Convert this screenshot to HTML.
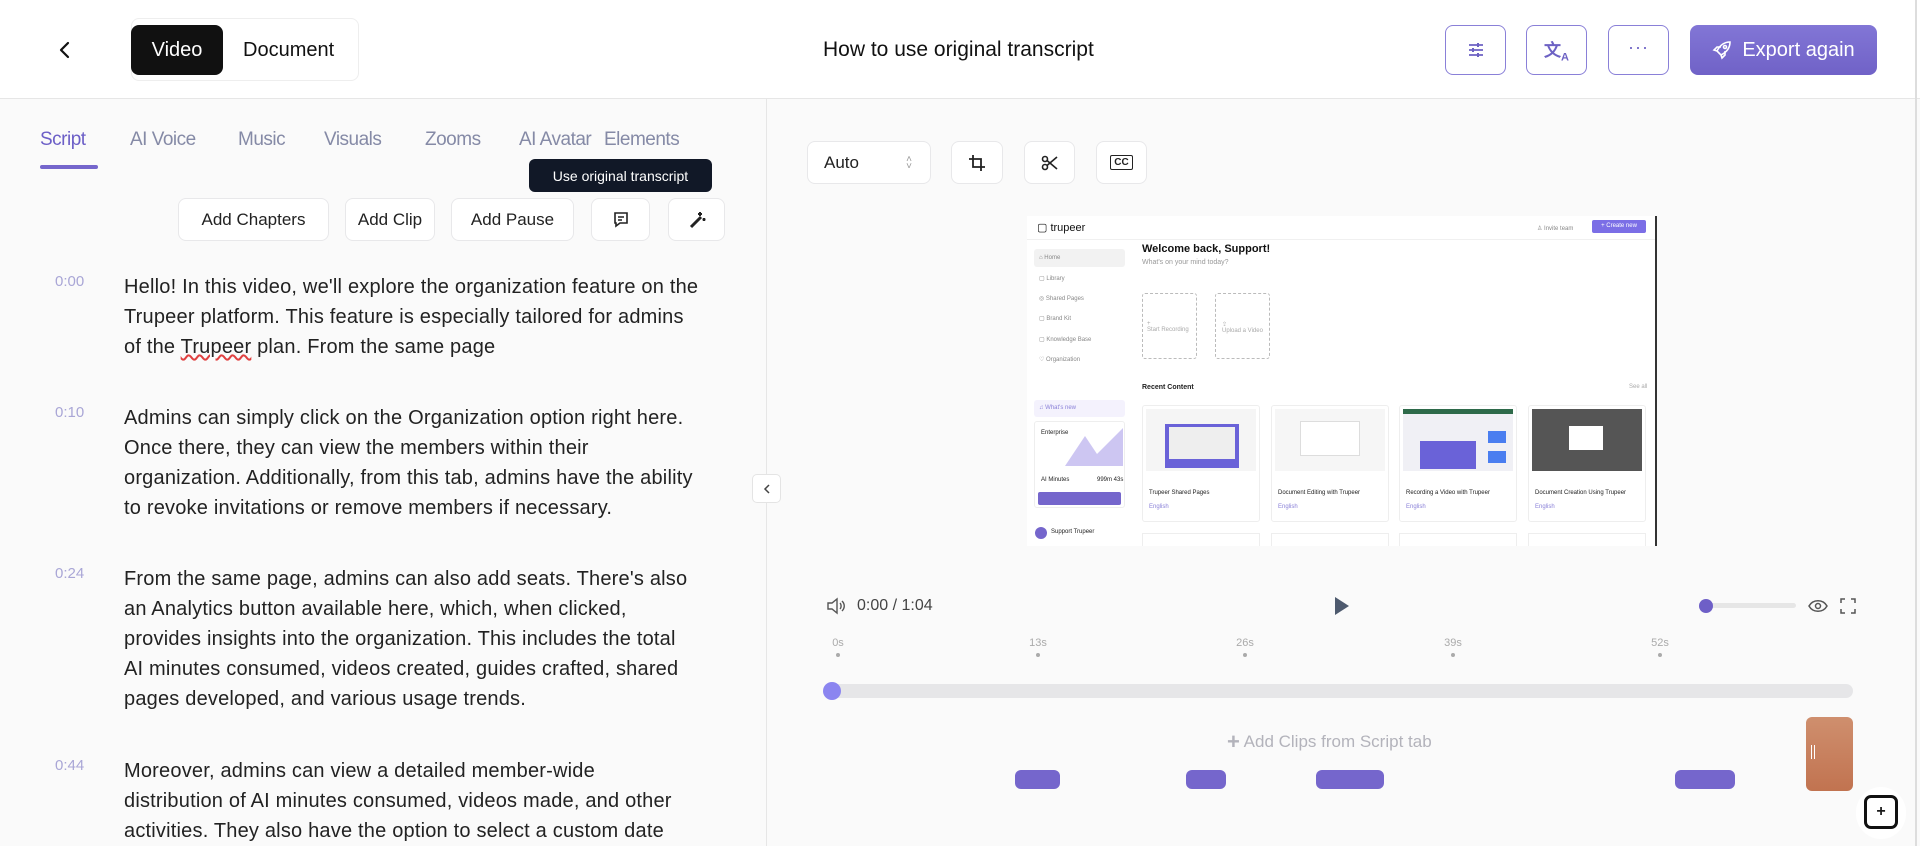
<!DOCTYPE html>
<html><head><meta charset="utf-8"><style>
*{box-sizing:border-box;margin:0;padding:0}
body{width:1920px;height:846px;overflow:hidden;background:#fafafa;font-family:"Liberation Sans",sans-serif;color:#1a1a1a;position:relative}
.a{position:absolute}
.hdr{left:0;top:0;width:1920px;height:99px;background:#fff;border-bottom:1px solid #e6e6e6}
.btn{position:absolute;border:1px solid #e8e8ea;background:#fff;border-radius:8px;display:flex;align-items:center;justify-content:center;font-size:17px;color:#222}
.obtn{position:absolute;border:1.5px solid #8a80d8;background:#fff;border-radius:8px;display:flex;align-items:center;justify-content:center}
.tab{position:absolute;top:129px;font-size:19px;letter-spacing:-0.5px;color:#858aa6}
.ts{position:absolute;left:55px;font-size:15px;color:#a9a6d6}
.p{position:absolute;left:124px;font-size:20px;letter-spacing:0.2px;line-height:30px;color:#222;white-space:nowrap}
.tick{position:absolute;top:637px;font-size:11px;color:#aaa;transform:translateX(-50%)}
.dot{position:absolute;top:653px;width:4px;height:4px;border-radius:2px;background:#aaa}
.pill{position:absolute;top:770px;height:19px;border-radius:6px;background:#7566cc}
.t{position:absolute;font-size:6px;color:#888;white-space:nowrap}
</style></head><body>
<div class="a hdr"></div>
<svg class="a" style="left:56px;top:40px" width="18" height="20" viewBox="0 0 18 20"><path d="M12 3 L5 10 L12 17" stroke="#111" stroke-width="2.2" fill="none" stroke-linecap="round" stroke-linejoin="round"/></svg>
<div class="a" style="left:131px;top:18px;width:228px;height:63px;border:1px solid #eee;border-radius:8px;background:#fff"></div>
<div class="a" style="left:131px;top:25px;width:92px;height:50px;background:#111;border-radius:8px;color:#fff;font-size:20px;display:flex;align-items:center;justify-content:center">Video</div>
<div class="a" style="left:243px;top:39px;font-size:20px;color:#111">Document</div>
<div class="a" style="left:823px;top:38px;font-size:21px;color:#111">How to use original transcript</div>
<div class="obtn" style="left:1445px;top:25px;width:61px;height:50px"><svg width="20" height="20" viewBox="0 0 20 20" stroke="#6d62c4" stroke-width="1.8" fill="none"><path d="M3 5h14M3 10h14M3 15h14"/><path d="M12 3v4M7 8v4M12 13v4" stroke-width="2"/></svg></div>
<div class="obtn" style="left:1526px;top:25px;width:61px;height:50px"><span style="color:#6d62c4;font-size:17px;font-weight:bold">文<sub style="font-size:11px">A</sub></span></div>
<div class="obtn" style="left:1608px;top:25px;width:61px;height:50px"><span style="color:#6d62c4;font-size:18px;letter-spacing:1px;margin-top:-6px">···</span></div>
<div class="a" style="left:1690px;top:25px;width:187px;height:50px;border-radius:8px;background:linear-gradient(#8276d6,#7062c7);color:#fff;font-size:20px;display:flex;align-items:center;justify-content:center;gap:10px"><svg width="20" height="20" viewBox="0 0 20 20" fill="none" stroke="#fff" stroke-width="1.6"><path d="M7 13 L5 11 C8 5 12 2 18 2 C18 8 15 12 9 15 Z"/><path d="M5 11 L2 10 L5 7 L9 7 M9 15 L10 18 L13 15 L13 11"/><circle cx="13" cy="7" r="1.5"/></svg>Export again</div>
<div class="a" style="left:1915px;top:0;width:2px;height:846px;background:#ddd"></div>

<!-- left panel -->
<div class="a" style="left:766px;top:99px;width:1px;height:747px;background:#e6e6e6"></div>
<div class="tab" style="left:40px;color:#6c5fc7">Script</div>
<div class="a" style="left:40px;top:165px;width:58px;height:4px;border-radius:2px;background:#7566cc"></div>
<div class="tab" style="left:130px">AI Voice</div>
<div class="tab" style="left:238px">Music</div>
<div class="tab" style="left:324px">Visuals</div>
<div class="tab" style="left:425px">Zooms</div>
<div class="tab" style="left:519px">AI Avatar</div>
<div class="tab" style="left:604px">Elements</div>
<div class="a" style="left:529px;top:159px;width:183px;height:33px;background:#111827;border-radius:6px;color:#fff;font-size:14px;display:flex;align-items:center;justify-content:center">Use original transcript</div>
<div class="btn" style="left:178px;top:198px;width:151px;height:43px">Add Chapters</div>
<div class="btn" style="left:345px;top:198px;width:90px;height:43px">Add Clip</div>
<div class="btn" style="left:451px;top:198px;width:123px;height:43px">Add Pause</div>
<div class="btn" style="left:591px;top:198px;width:59px;height:43px"><svg width="18" height="18" viewBox="0 0 18 18" fill="none" stroke="#222" stroke-width="1.6"><path d="M3 2h12v10H8l-4 3v-3H3z"/><path d="M6 6h6M6 9h4"/></svg></div>
<div class="btn" style="left:668px;top:198px;width:57px;height:43px"><svg width="18" height="18" viewBox="0 0 18 18" fill="none" stroke="#222" stroke-width="2"><path d="M3 16 L13 6" stroke-width="3"/><path d="M12 1v4M10 3h4M16 7v3M14.5 8.5h3"/></svg></div>

<div class="ts" style="top:273px">0:00</div>
<div class="p" style="top:272px">Hello! In this video, we'll explore the organization feature on the<br>Trupeer platform. This feature is especially tailored for admins<br>of the <span style="text-decoration:underline wavy #e04040">Trupeer</span> plan. From the same page</div>
<div class="ts" style="top:404px">0:10</div>
<div class="p" style="top:403px">Admins can simply click on the Organization option right here.<br>Once there, they can view the members within their<br>organization. Additionally, from this tab, admins have the ability<br>to revoke invitations or remove members if necessary.</div>
<div class="ts" style="top:565px">0:24</div>
<div class="p" style="top:564px">From the same page, admins can also add seats. There's also<br>an Analytics button available here, which, when clicked,<br>provides insights into the organization. This includes the total<br>AI minutes consumed, videos created, guides crafted, shared<br>pages developed, and various usage trends.</div>
<div class="ts" style="top:757px">0:44</div>
<div class="p" style="top:756px">Moreover, admins can view a detailed member-wide<br>distribution of AI minutes consumed, videos made, and other<br>activities. They also have the option to select a custom date</div>
<div class="a" style="left:752px;top:474px;width:29px;height:29px;border:1px solid #e4e4e4;border-radius:5px;background:#fff;display:flex;align-items:center;justify-content:center"><svg width="10" height="12" viewBox="0 0 10 12"><path d="M7 2 L3 6 L7 10" stroke="#444" stroke-width="1.5" fill="none"/></svg></div>

<!-- right toolbar -->
<div class="btn" style="left:807px;top:141px;width:124px;height:43px;justify-content:flex-start;padding-left:16px">Auto<span style="position:absolute;right:18px;font-size:10px;color:#999;line-height:7px">˄<br>˅</span></div>
<div class="btn" style="left:951px;top:141px;width:52px;height:43px"><svg width="18" height="18" viewBox="0 0 18 18" fill="none" stroke="#222" stroke-width="1.8"><path d="M5 1v12h12M1 5h12v12"/></svg></div>
<div class="btn" style="left:1024px;top:141px;width:51px;height:43px"><svg width="18" height="18" viewBox="0 0 18 18" fill="none" stroke="#222" stroke-width="1.6"><circle cx="4" cy="5" r="2.5"/><circle cx="4" cy="13" r="2.5"/><path d="M6 6.5 L16 15M6 11.5 L16 3"/></svg></div>
<div class="btn" style="left:1096px;top:141px;width:51px;height:43px"><div style="border:1.5px solid #222;border-radius:2px;font-size:10px;padding:1px 3px;font-weight:bold">CC</div></div>

<!-- preview -->
<div class="a" style="left:1027px;top:216px;width:630px;height:330px;background:#fff;overflow:hidden;border-right:2px solid #333">
 <div class="a" style="left:0;top:0;width:630px;height:24px;border-bottom:1px solid #f0f0f0"></div>
 <div class="a" style="left:10px;top:5px;font-size:11px;color:#111">▢ trupeer</div>
 <div class="t" style="left:510px;top:9px">♙ Invite team</div>
 <div class="a" style="left:565px;top:4px;width:54px;height:13px;background:#7b6ee6;border-radius:2px;color:#fff;font-size:6px;text-align:center;line-height:13px">+ Create new</div>
 <div class="a" style="left:7px;top:33px;width:91px;height:18px;background:#f2f2f2;border-radius:3px"></div>
 <div class="t" style="left:12px;top:39px">⌂ Home</div>
 <div class="t" style="left:12px;top:59px">▢ Library</div>
 <div class="t" style="left:12px;top:79px">◎ Shared Pages</div>
 <div class="t" style="left:12px;top:99px">▢ Brand Kit</div>
 <div class="t" style="left:12px;top:120px">▢ Knowledge Base</div>
 <div class="t" style="left:12px;top:140px">♡ Organization</div>
 <div class="a" style="left:7px;top:184px;width:91px;height:17px;background:#f4f2fd;border-radius:3px"></div>
 <div class="t" style="left:12px;top:189px;color:#8a80d8">♫ What's new</div>
 <div class="a" style="left:7px;top:205px;width:91px;height:87px;border:1px solid #eee;border-radius:3px;overflow:hidden">
  <div class="t" style="left:6px;top:8px;color:#222">Enterprise</div>
  <svg class="a" style="left:30px;top:4px" width="60" height="40" viewBox="0 0 60 40"><path d="M0 40 L20 10 L32 28 L58 2 L58 40Z" fill="#cdc6f2"/></svg>
  <div class="t" style="left:6px;top:55px;color:#222">AI Minutes</div>
  <div class="t" style="left:62px;top:55px;color:#222">999m 43s</div>
  <div class="a" style="left:3px;top:70px;width:83px;height:13px;background:#7566cc;border-radius:2px"></div>
 </div>
 <div class="a" style="left:8px;top:311px;width:12px;height:12px;border-radius:6px;background:#7566cc"></div>
 <div class="t" style="left:24px;top:313px;color:#222">Support Trupeer</div>
 <div class="a" style="left:115px;top:27px;font-size:11px;font-weight:bold;color:#111">Welcome back, Support!</div>
 <div class="a" style="left:115px;top:43px;font-size:7px;color:#999">What's on your mind today?</div>
 <div class="a" style="left:115px;top:77px;width:55px;height:66px;border:1px dashed #bbb;border-radius:3px"></div>
 <div class="a" style="left:188px;top:77px;width:55px;height:66px;border:1px dashed #bbb;border-radius:3px"></div>
 <div class="t" style="left:120px;top:105px;color:#aaa">+<br>Start Recording</div>
 <div class="t" style="left:195px;top:105px;color:#aaa">⇪<br>Upload a Video</div>
 <div class="a" style="left:115px;top:168px;font-size:7px;font-weight:bold;color:#222">Recent Content</div>
 <div class="t" style="left:602px;top:168px;color:#aaa">See all</div>
 <div class="a" style="left:115px;top:189px;width:118px;height:117px;border:1px solid #eee;border-radius:3px"><div class="a" style="left:3px;top:3px;width:110px;height:62px;background:#f5f5f5"></div><div class="a" style="left:22px;top:18px;width:74px;height:44px;background:#6a62d8"></div><div class="a" style="left:26px;top:21px;width:66px;height:32px;background:#eee"></div><div class="t" style="left:6px;top:84px;color:#222">Trupeer Shared Pages</div><div class="t" style="left:6px;top:98px;color:#8a80d8">English</div></div>
 <div class="a" style="left:244px;top:189px;width:118px;height:117px;border:1px solid #eee;border-radius:3px"><div class="a" style="left:3px;top:3px;width:110px;height:62px;background:#f6f6f6"></div><div class="a" style="left:28px;top:15px;width:60px;height:35px;background:#fff;border:1px solid #ddd"></div><div class="t" style="left:6px;top:84px;color:#222">Document Editing with Trupeer</div><div class="t" style="left:6px;top:98px;color:#8a80d8">English</div></div>
 <div class="a" style="left:372px;top:189px;width:118px;height:117px;border:1px solid #eee;border-radius:3px"><div class="a" style="left:3px;top:3px;width:110px;height:62px;background:#f0f0f5"></div><div class="a" style="left:3px;top:3px;width:110px;height:5px;background:#2e6a4a"></div><div class="a" style="left:20px;top:35px;width:56px;height:28px;background:#6a62d8"></div><div class="a" style="left:88px;top:25px;width:18px;height:12px;background:#4a7ef0"></div><div class="a" style="left:88px;top:45px;width:18px;height:12px;background:#4a7ef0"></div><div class="t" style="left:6px;top:84px;color:#222">Recording a Video with Trupeer</div><div class="t" style="left:6px;top:98px;color:#8a80d8">English</div></div>
 <div class="a" style="left:501px;top:189px;width:118px;height:117px;border:1px solid #eee;border-radius:3px"><div class="a" style="left:3px;top:3px;width:110px;height:62px;background:#555"></div><div class="a" style="left:40px;top:20px;width:34px;height:24px;background:#fff"></div><div class="t" style="left:6px;top:84px;color:#222">Document Creation Using Trupeer</div><div class="t" style="left:6px;top:98px;color:#8a80d8">English</div></div>
 <div class="a" style="left:115px;top:317px;width:118px;height:20px;border:1px solid #eee"></div>
 <div class="a" style="left:244px;top:317px;width:118px;height:20px;border:1px solid #eee"></div>
 <div class="a" style="left:372px;top:317px;width:118px;height:20px;border:1px solid #eee"></div>
 <div class="a" style="left:501px;top:317px;width:118px;height:20px;border:1px solid #eee"></div>
</div>

<!-- controls -->
<svg class="a" style="left:826px;top:597px" width="20" height="18" viewBox="0 0 20 18" fill="none" stroke="#555" stroke-width="1.4"><path d="M2 6h4l5-4v14l-5-4H2z"/><path d="M14 6c1.5 1.5 1.5 4.5 0 6M16 4c3 3 3 7 0 10"/></svg>
<div class="a" style="left:857px;top:597px;font-size:16px;color:#444">0:00 / 1:04</div>
<svg class="a" style="left:1334px;top:596px" width="16" height="20" viewBox="0 0 16 20"><path d="M1 1 L15 10 L1 19Z" fill="#4e5a6e"/></svg>
<div class="a" style="left:1706px;top:603px;width:90px;height:5px;border-radius:3px;background:#e6e6e6"></div>
<div class="a" style="left:1699px;top:599px;width:14px;height:14px;border-radius:7px;background:#6e5fc7"></div>
<svg class="a" style="left:1808px;top:597px" width="20" height="18" viewBox="0 0 20 18" fill="none" stroke="#555" stroke-width="1.5"><path d="M1 9 C5 2 15 2 19 9 C15 16 5 16 1 9Z"/><circle cx="10" cy="9" r="2.5"/></svg>
<svg class="a" style="left:1840px;top:598px" width="16" height="16" viewBox="0 0 16 16" fill="none" stroke="#555" stroke-width="1.5"><path d="M1 5V1h4M11 1h4v4M15 11v4h-4M5 15H1v-4"/></svg>
<div class="tick" style="left:838px">0s</div><div class="dot" style="left:836px"></div>
<div class="tick" style="left:1038px">13s</div><div class="dot" style="left:1036px"></div>
<div class="tick" style="left:1245px">26s</div><div class="dot" style="left:1243px"></div>
<div class="tick" style="left:1453px">39s</div><div class="dot" style="left:1451px"></div>
<div class="tick" style="left:1660px">52s</div><div class="dot" style="left:1658px"></div>
<div class="a" style="left:826px;top:684px;width:1027px;height:14px;border-radius:7px;background:#e6e6e8"></div>
<div class="a" style="left:823px;top:682px;width:18px;height:18px;border-radius:9px;background:#8b85f0"></div>
<div class="a" style="left:1227px;top:729px;font-size:17px;color:#b3b3bb"><b style="font-size:22px;vertical-align:-2px">+</b> Add Clips from Script tab</div>
<div class="pill" style="left:1015px;width:45px"></div>
<div class="pill" style="left:1186px;width:40px"></div>
<div class="pill" style="left:1316px;width:68px"></div>
<div class="pill" style="left:1675px;width:60px"></div>
<div class="a" style="left:1806px;top:717px;width:47px;height:74px;border-radius:6px;background:linear-gradient(#cf8f6e,#c17350)"><div class="a" style="left:5px;top:28px;width:4px;height:14px;border-left:1px solid #fff;border-right:1px solid #fff"></div></div>
<div class="a" style="left:1856px;top:787px;width:50px;height:52px;border-radius:25px;background:#fff"></div>
<div class="a" style="left:1864px;top:795px;width:34px;height:34px;border:3px solid #111;border-radius:7px;display:flex;align-items:center;justify-content:center;font-size:16px;font-weight:bold">+</div>
</body></html>
